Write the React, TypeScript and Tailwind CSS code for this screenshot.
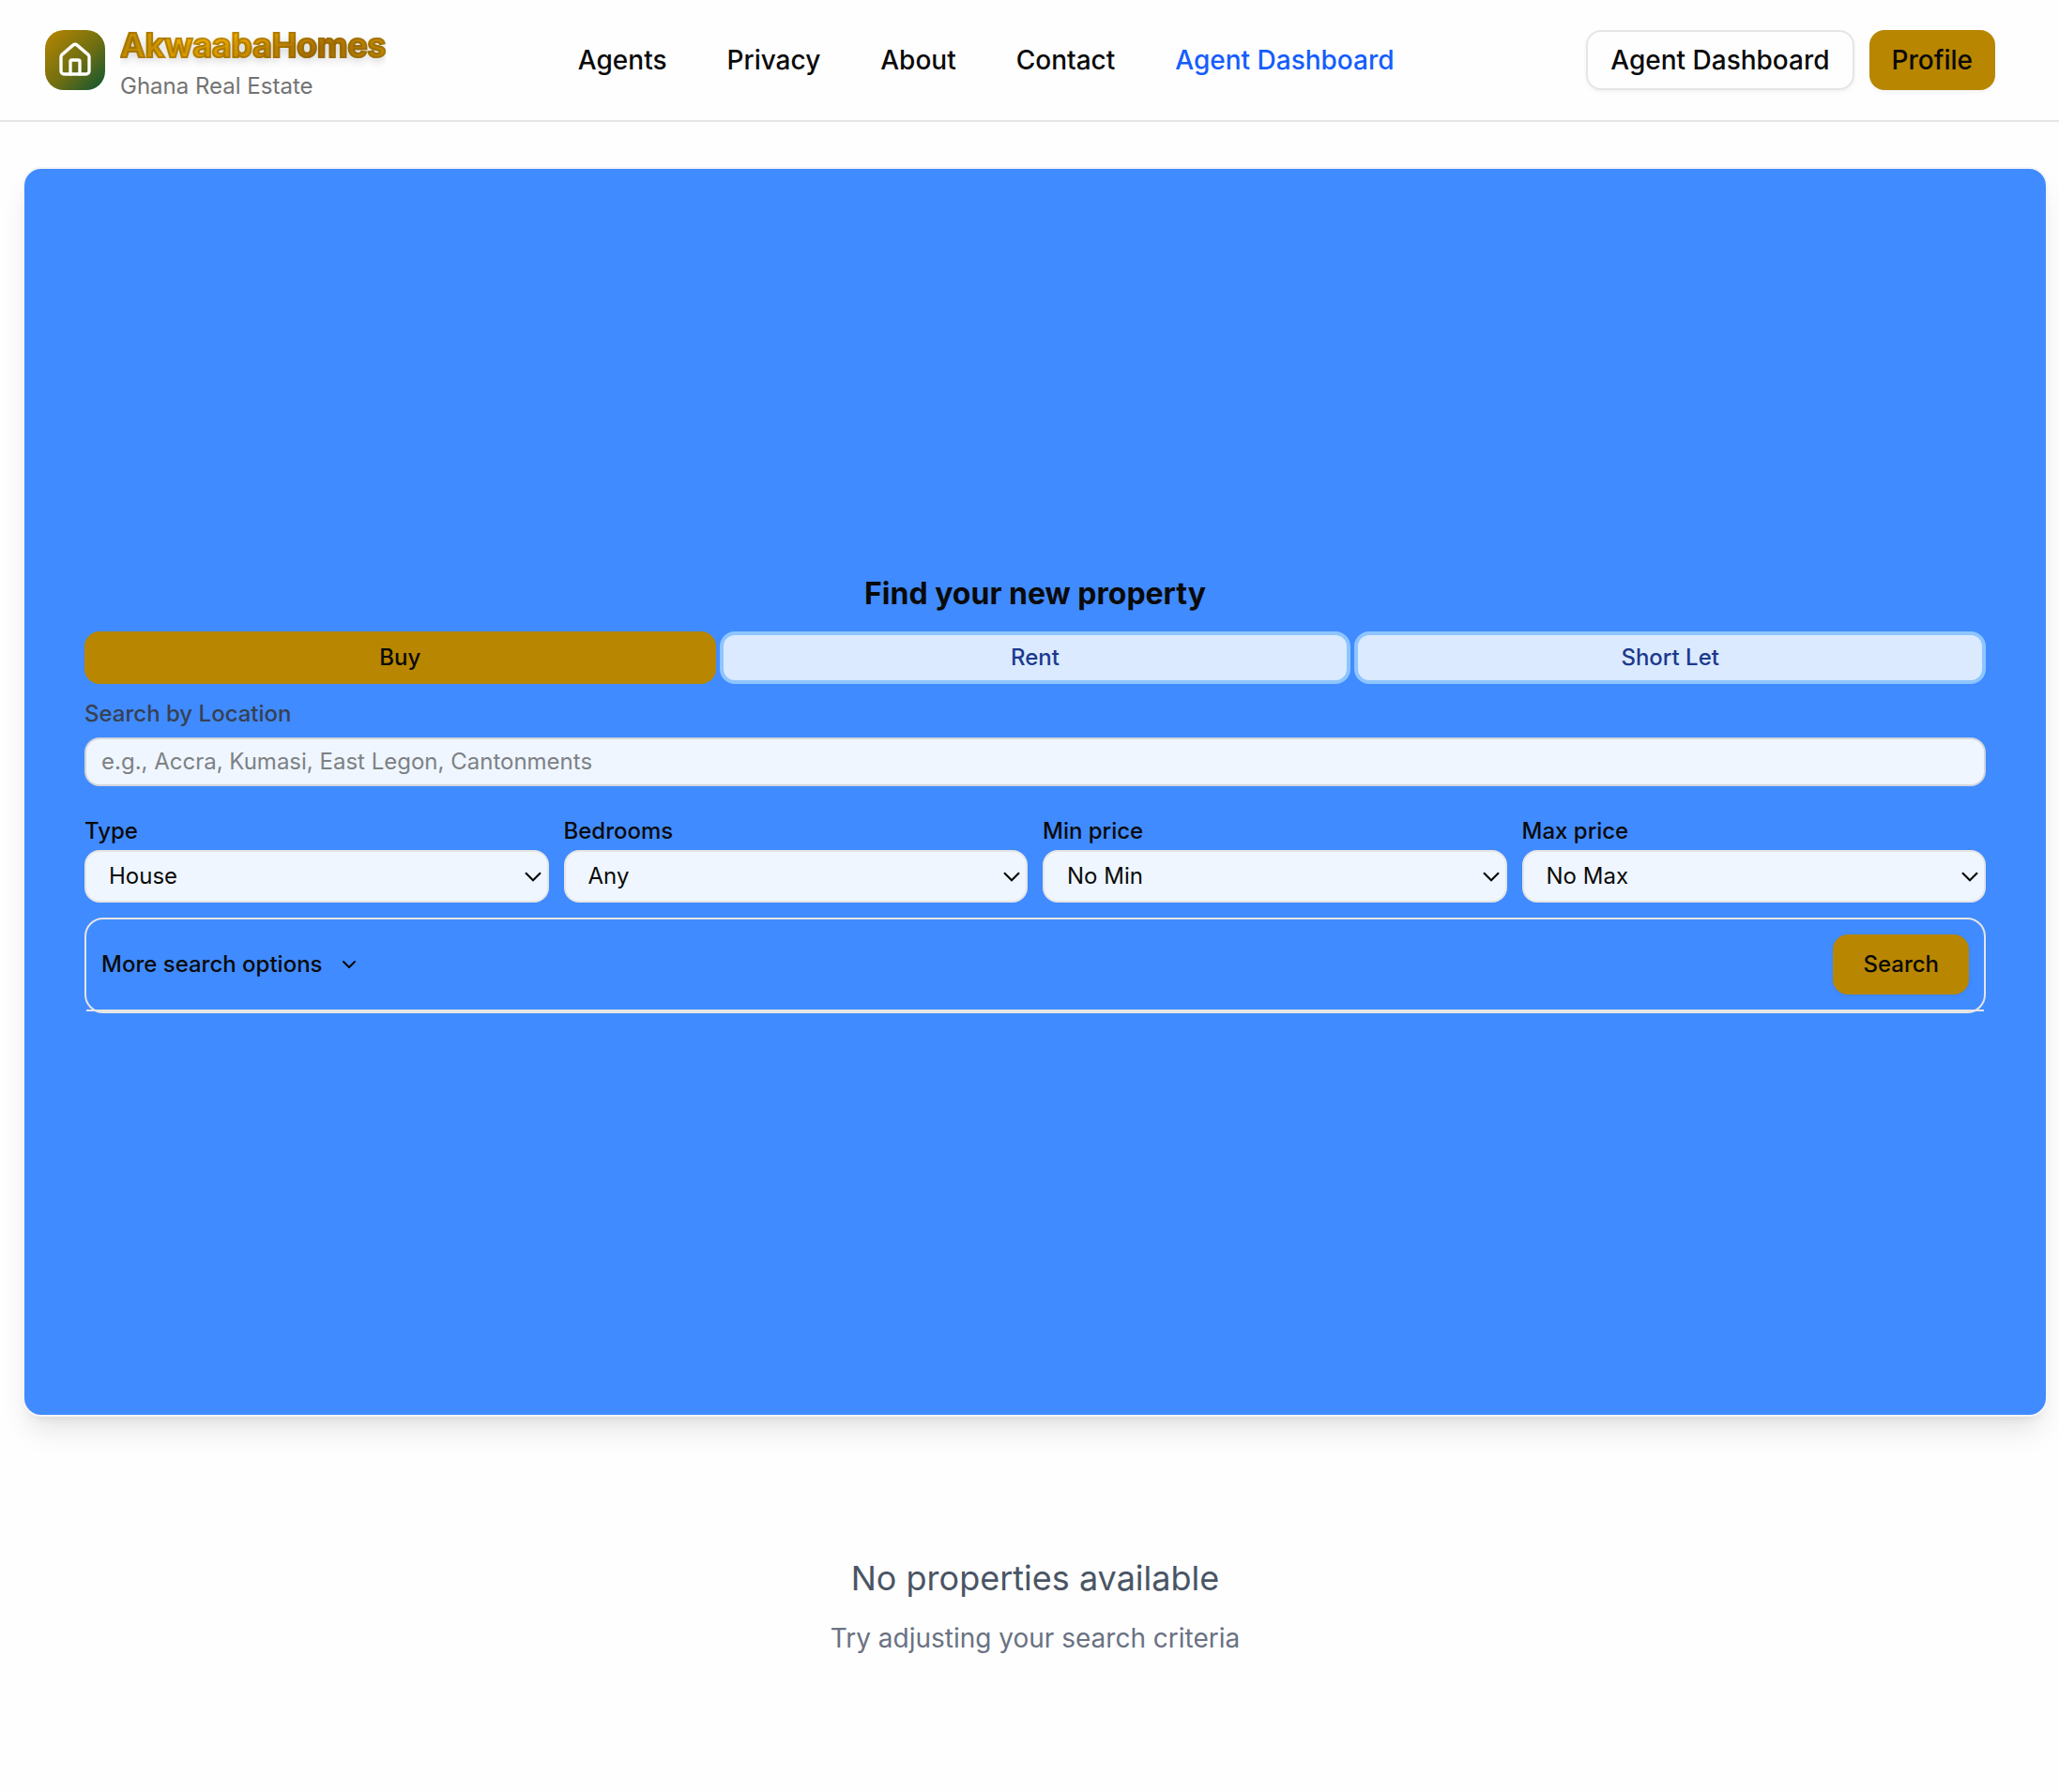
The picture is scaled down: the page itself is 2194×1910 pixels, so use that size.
import { ChevronDown, House } from "lucide-react";

const links = ["Agents", "Privacy", "About", "Contact"];

const filters = [
  { label: "Type", value: "House" },
  { label: "Bedrooms", value: "Any" },
  { label: "Min price", value: "No Min" },
  { label: "Max price", value: "No Max" },
];

function Header() {
  return (
    <header className="flex h-[130px] items-center justify-between border-b-2 border-[#e5e5e5] pr-[68px] pl-12">
      <div className="flex items-center gap-4">
        <div className="flex size-16 items-center justify-center rounded-[20px] bg-[linear-gradient(135deg,#b88600_0%,#6e6e12_55%,#0b5535_100%)]">
          <House className="size-10 text-white" />
        </div>
        <div className="flex flex-col">
          <span className="overflow-hidden bg-[linear-gradient(135deg,#b88600_0%,#f5ae00_25%,#f5ae00_42%,#b87a00_72%,#d49a00_100%)] bg-clip-text text-[36px] leading-[56px] font-bold tracking-[-0.36px] whitespace-nowrap text-transparent [-webkit-text-stroke:2px_rgba(135,95,0,0.5)] [text-shadow:0_4px_8px_rgba(0,0,0,0.2)]">
            AkwaabaHomes
          </span>
          <span className="text-[24px] leading-8 text-[#737373]">Ghana Real Estate</span>
        </div>
      </div>
      <nav className="flex gap-16 text-[28px] font-medium">
        {links.map((link) => (
          <a key={link} href="#">
            {link}
          </a>
        ))}
        <a href="#" className="text-[#155dfc]">
          Agent Dashboard
        </a>
      </nav>
      <div className="flex gap-4 text-[28px] font-medium">
        <button className="h-16 rounded-[16px] border-2 border-[#e5e5e5] px-6 shadow-[0_2px_4px_rgba(0,0,0,0.05)]">
          Agent Dashboard
        </button>
        <button className="h-16 rounded-[16px] bg-[#b88600] px-6 shadow-[0_2px_4px_rgba(0,0,0,0.05)]">Profile</button>
      </div>
    </header>
  );
}

function SelectField({ label, value }: { label: string; value: string }) {
  return (
    <label className="flex flex-col">
      <span className="text-[24px] leading-[40px] font-medium">{label}</span>
      <span className="relative block">
        <select className="block h-14 w-full appearance-none rounded-[16px] border-2 border-[#e5e5e5] bg-[#eff6ff] px-6 text-[24px]">
          <option>{value}</option>
        </select>
        <svg
          viewBox="0 0 18 11"
          className="pointer-events-none absolute top-[23px] right-[8px] h-[11px] w-[18px]"
          fill="none"
          stroke="currentColor"
          strokeWidth="2.2"
        >
          <path d="M1 1.2 9 9.2 17 1.2" />
        </svg>
      </span>
    </label>
  );
}

function SearchPanel() {
  return (
    <section className="mt-12 mr-3 ml-6 h-[1332px] rounded-[20px] border-2 border-[#f5f5f5] bg-[#408bff] px-16 pt-[433px] shadow-[0_20px_30px_-6px_rgba(0,0,0,0.1),0_8px_12px_-8px_rgba(0,0,0,0.1)]">
      <h1 className="text-center text-[32px] leading-[40px] font-bold">Find your new property</h1>
      <div className="mt-5 grid grid-cols-3 gap-1 text-[24px] font-medium">
        <button className="h-14 rounded-[16px] bg-[#b88600]">Buy</button>
        <button className="h-14 rounded-[16px] border-4 border-[#8ec5ff] bg-[#dbeafe] text-[#1c398e]">Rent</button>
        <button className="h-14 rounded-[16px] border-4 border-[#8ec5ff] bg-[#dbeafe] text-[#1c398e]">Short Let</button>
      </div>
      <label className="mt-4 block text-[24px] leading-8 font-medium text-[#364153]">Search by Location</label>
      <input
        className="mt-[9px] block h-[52px] w-full rounded-[16px] border-2 border-[#d1d5dc] bg-[#eff6ff] px-4 pb-0.5 text-[24px] placeholder:text-[#7d8184]"
        placeholder="e.g., Accra, Kumasi, East Legon, Cantonments"
      />
      <div className="mt-7 grid grid-cols-4 gap-4">
        {filters.map((f) => (
          <SelectField key={f.label} label={f.label} value={f.value} />
        ))}
      </div>
      <div className="mt-4 rounded-[20px] border-2 border-[#e5e5e5]">
        <div className="flex items-center justify-between border-b-2 border-[#e5e5e5] p-4 text-[24px] font-medium">
          <button className="flex items-center gap-4">
            More search options
            <ChevronDown className="size-6" />
          </button>
          <button className="h-16 rounded-[16px] bg-[#b88600] px-8 shadow-[0_2px_4px_rgba(0,0,0,0.05)]">Search</button>
        </div>
      </div>
    </section>
  );
}

export default function App() {
  return (
    <div className="min-h-[1910px] overflow-hidden bg-[#fefefe] font-['Inter',sans-serif] text-[#0a0a0a]">
      <Header />
      <SearchPanel />
      <div className="mt-[144px] mr-3 ml-6 flex flex-col items-center">
        <p className="text-[36px] leading-[56px] text-[#4a5565]">No properties available</p>
        <p className="mt-4 text-[28px] leading-[40px] text-[#6a7282]">Try adjusting your search criteria</p>
      </div>
    </div>
  );
}
